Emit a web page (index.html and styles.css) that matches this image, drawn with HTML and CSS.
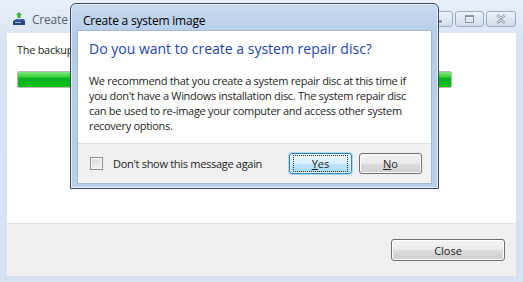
FILE: index.html
```html
<!DOCTYPE html>
<html lang="en">
<head>
    <meta charset="UTF-8">
    <title>Create a system image</title>
    <link rel="stylesheet" href="styles.css">
</head>
<body>

<div class="window">
    <div class="titlebar">
        <svg class="app-icon" width="14" height="14" viewBox="0 0 14 14">
            <path d="M1 9 L4 7 L12 7 L13 9 L13 13 L1 13 Z" fill="#3b5fa8"/>
            <path d="M1 9 L13 9 L13 13 L1 13 Z" fill="#27407a"/>
            <rect x="3" y="10" width="6" height="1" fill="#9fb8e6"/>
            <path d="M7 0 L10 3 L8.5 3 L8.5 6 L5.5 6 L5.5 3 L4 3 Z" fill="#2fb52f"/>
        </svg>
        <span class="title">Create a system image</span>
        <div class="caption-buttons">
            <span class="cap-btn"><span class="glyph-min"></span></span>
            <span class="cap-btn"><span class="glyph-max"></span></span>
            <span class="cap-btn cap-close">
                <svg width="12" height="10" viewBox="0 0 12 10">
                    <path d="M2 1 L6 4 L10 1 M2 9 L6 6 L10 9" stroke="#8a96a6" stroke-width="2.4" fill="none"/>
                    <path d="M2 1 L6 4 L10 1 M2 9 L6 6 L10 9" stroke="#eef2f7" stroke-width="1" fill="none"/>
                </svg>
            </span>
        </div>
    </div>

    <div class="client">
        <div class="content">
            <p class="status">The backup was saved successfully.</p>
            <div class="progress"><div class="progress-fill"></div></div>
        </div>
        <div class="footer">
            <button class="btn btn-close">Close</button>
        </div>
    </div>

    <div class="dialog">
        <div class="dialog-title">Create a system image</div>
        <div class="dialog-client">
            <div class="dialog-body">
                <h1 class="instruction">Do you want to create a system repair disc?</h1>
                <p class="message">
                    We recommend that you create a system repair disc at this time if<br>
                    you don't have a Windows installation disc. The system repair disc<br>
                    can be used to re-image your computer and access other system<br>
                    recovery options.
                </p>
            </div>
            <div class="dialog-footer">
                <span class="checkbox"></span>
                <span class="check-label">Don't show this message again</span>
                <button class="btn btn-default"><span class="focus"><u>Y</u>es</span></button>
                <button class="btn"><u>N</u>o</button>
            </div>
        </div>
    </div>
</div>

</body>
</html>
```

FILE: styles.css
```css
body {
    margin: 0;
    padding: 0;
    font-family: 'Open Sans', 'Noto Sans', sans-serif;
    font-size: 11px;
    color: #1e1e1e;
    background: #fff;
}

.window {
    position: relative;
    width: 523px;
    height: 282px;
    display: flex;
    flex-direction: column;
    background: linear-gradient(to bottom, #e9f0f9 0px, #d9e4f3 40px, #d6e2f2 100%);
}

/* Title bar of the main window */
.titlebar {
    height: 33px;
    box-sizing: border-box;
    padding: 5px 7px 0 12px;
    display: flex;
    align-items: center;
}

.app-icon {
    margin-right: 6px;
    margin-top: -1px;
}

.title {
    font-size: 12px;
    letter-spacing: -0.2px;
    color: #56606e;
}

.caption-buttons {
    margin-left: auto;
    align-self: flex-start;
    margin-top: 6px;
    display: flex;
    gap: 2px;
}

.cap-btn {
    width: 27px;
    height: 14px;
    border: 1px solid #9aabc2;
    border-radius: 3px;
    background: linear-gradient(to bottom, #eef3f9 0%, #dfe7f2 50%, #d4deec 100%);
    display: flex;
    align-items: center;
    justify-content: center;
}

.cap-close {
    width: 28px;
}

.glyph-min {
    width: 7px;
    height: 3px;
    margin-top: 5px;
    background: #8a96a6;
    border: 1px solid #eef2f7;
}

.glyph-max {
    width: 7px;
    height: 5px;
    border: 1px solid #8a96a6;
    border-top-width: 2px;
    box-shadow: inset 0 0 0 1px #eef2f7;
}

/* Client area of the main window */
.client {
    flex: 1;
    margin: 0 7px 6px 7px;
    display: flex;
    flex-direction: column;
}

.content {
    flex: 1;
    background: #fff;
    padding: 9px 10px 0 10px;
}

.status {
    margin: 0;
    font-size: 11px;
    line-height: 16px;
    letter-spacing: -0.3px;
    white-space: nowrap;
}

.progress {
    width: 433px;
    margin-top: 13px;
    height: 15px;
    border: 1px solid #b8b8b8;
    border-radius: 2px;
    background: #e6e6e6;
}

.progress-fill {
    height: 100%;
    background: linear-gradient(to bottom, #7ee57e 0%, #37d037 35%, #06b025 40%, #14c014 100%);
}

.footer {
    height: 52px;
    border-top: 1px solid #dfdfdf;
    background: #f0f0f0;
    display: flex;
    align-items: center;
    justify-content: flex-end;
    padding-right: 11px;
}

.btn {
    font-family: 'Open Sans', 'Noto Sans', sans-serif;
    font-size: 11px;
    color: #1e1e1e;
    height: 21px;
    padding: 0;
    border: 1px solid #707070;
    border-radius: 3px;
    background: linear-gradient(to bottom, #f2f2f2 0%, #ebebeb 50%, #dddddd 51%, #cfcfcf 100%);
    box-shadow: inset 0 0 0 1px #fcfcfc;
}

.btn-close {
    width: 114px;
    height: 22px;
}

/* Message box on top */
.dialog {
    position: absolute;
    left: 70px;
    top: 3px;
    width: 369px;
    height: 186px;
    box-sizing: border-box;
    border: 1px solid #39485c;
    border-radius: 6px 6px 0 0;
    background: linear-gradient(to bottom, #c9daef 0%, #b6cde9 30px, #b9d0eb 100%);
    box-shadow: inset 0 0 0 1px #e4eef9;
    display: flex;
    flex-direction: column;
}

.dialog-title {
    height: 26px;
    box-sizing: border-box;
    padding: 6px 0 0 12px;
    display: flex;
    align-items: center;
    font-size: 12px;
    letter-spacing: -0.2px;
    color: #000;
}

.dialog-client {
    flex: 1;
    margin: 0 6px 4px 6px;
    border: 1px solid #a3b7cf;
    display: flex;
    flex-direction: column;
    background: #fff;
    overflow: hidden;
}

.dialog-body {
    flex: 1;
    padding: 8px 11px 0 11px;
}

.instruction {
    margin: 0;
    font-size: 14px;
    font-weight: normal;
    line-height: 20px;
    color: #1d46ac;
    white-space: nowrap;
}

.message {
    margin: 14px 0 0 0;
    font-size: 11px;
    line-height: 15px;
    letter-spacing: -0.3px;
    white-space: nowrap;
}

.dialog-footer {
    height: 39px;
    flex: none;
    border-top: 1px solid #dfdfdf;
    background: #f0f0f0;
    display: flex;
    align-items: center;
    padding: 0 9px 0 12px;
}

.checkbox {
    width: 11px;
    height: 11px;
    border: 1px solid #8e8f8f;
    background: linear-gradient(135deg, #dcdcdc 0%, #f4f4f4 100%);
    box-shadow: inset 0 0 0 1px #f6f6f6;
}

.check-label {
    margin-left: 10px;
    margin-right: auto;
    letter-spacing: -0.3px;
}

.dialog-footer .btn {
    width: 63px;
    margin-left: 7px;
}

.btn-default {
    border-color: #3c7fb1;
    background: linear-gradient(to bottom, #eaf6fd 0%, #d9f0fc 50%, #bee6fd 51%, #a7d9f5 100%);
    box-shadow: 0 0 0 1px #a8dcf8, inset 0 0 0 1px #e6f4fc;
}

.focus {
    display: block;
    margin: 0 3px;
    line-height: 15px;
    border: 1px dotted #333;
}
```
